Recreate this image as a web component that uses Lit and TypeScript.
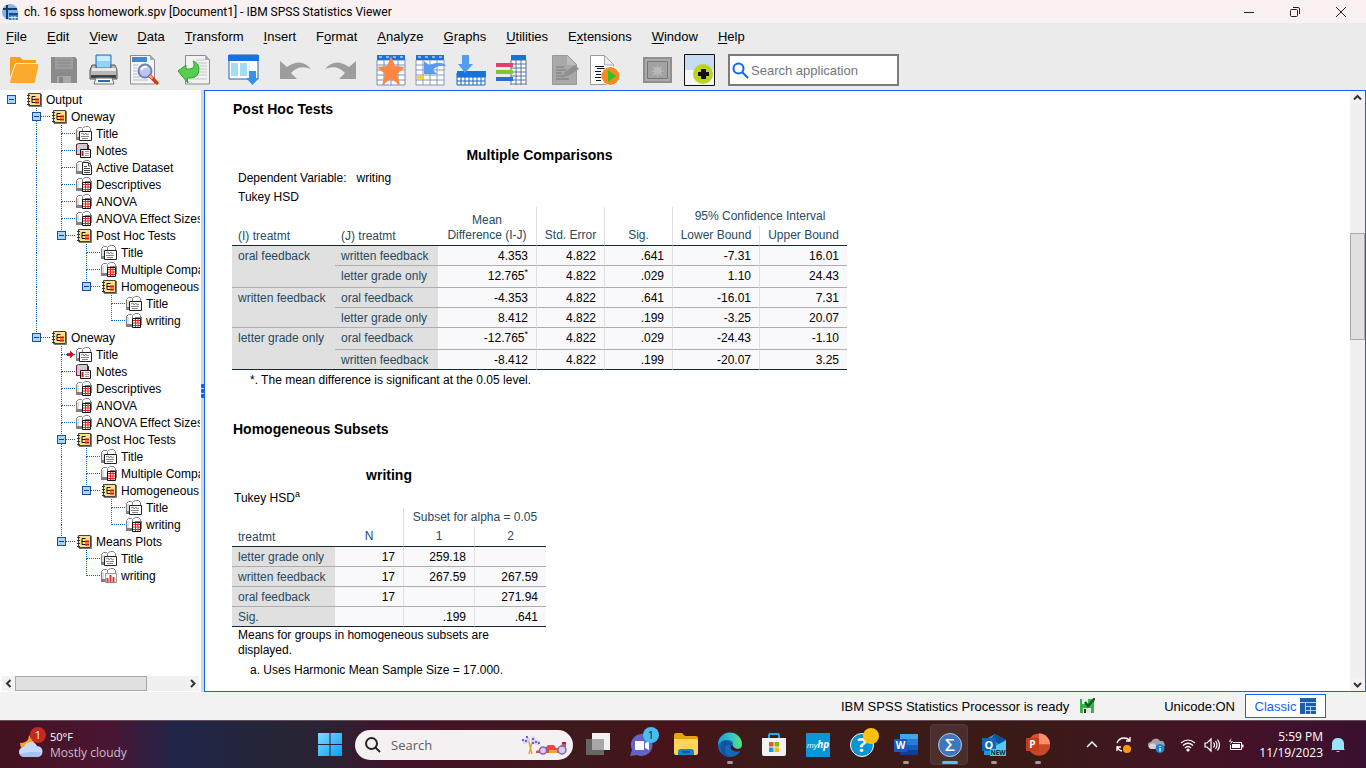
import { LitElement, html, svg, css, nothing } from "lit";
import { customElement, property } from "lit/decorators.js";

const grid = (x: number, y: number, w: number, h: number, sx: number, sy: number, color: string) => {
  const lines = [];
  for (let i = x; i <= x + w; i += sx) lines.push(svg`<path d="M${i} ${y}v${h}" stroke=${color} fill="none"/>`);
  for (let j = y; j <= y + h; j += sy) lines.push(svg`<path d="M${x} ${j}h${w}" stroke=${color} fill="none"/>`);
  return lines;
};

/* ---------- toolbar artwork, 32 x 32 ---------- */
const toolIcons: Record<string, unknown> = {
  open: svg`<path d="M2 4q0-1 1-1h9l3 3h12q1 0 1 1v2H8L2 24z" fill="#f8a11c"/>
    <path d="M9 10h20q1.500 0 1.300 1.500L27 28q-.3 1-1.500 1H3q-1.400 0-1-1.500L7 11.500Q7.500 10 9 10z" fill="#faab2b"/>
    <path d="M2 25L7.500 9.500H28" stroke="#ebebeb" fill="none"/>`,
  save: svg`<path d="M3 3h24l2 2v24H3z" fill="#8b8b8b"/><path d="M7 3h18v12H7z" fill="#9d9d9d"/>
    <path d="M9 6h14M9 9h14M9 12h14" stroke="#898989"/><path d="M9 22h14v7H9z" fill="#a9a9a9"/><path d="M11 23h4v6h-4z" fill="#858585"/>`,
  print: svg`<path d="M8 1h15v13H8z" fill="#8fd3fa" stroke="#2475bd"/><path d="M9 2h13v5H9z" fill="#c9ecff"/>
    <path d="M4 11h4v4h15v-4h4l2 5v9H2v-9z" fill="#b8b8b8" stroke="#555"/><path d="M4 14h24v3H4z" fill="#e8e8e8"/>
    <path d="M3 21h25v3H3z" fill="#444"/><path d="M8 24h16l2 6H6z" fill="#f9fbff" stroke="#777"/><path d="M10 26h12v2H10z" fill="#2f6fb1"/>`,
  preview: svg`<path d="M2.500 1.500h20l4 4.500v24h-24z" fill="#f3f5f8" stroke="#8b8b8b"/><path d="M22 1v5h5z" fill="#aaa"/>
    <path d="M4 3h15v5H4z" fill="#3b8cd2"/><path d="M5 11h5M5 14h4M5 17h4M5 20h4M5 23h7M5 26h15" stroke="#bbb"/>
    <circle cx="17" cy="17" r="6.500" fill="#b9c5f6" stroke="#7481b5" stroke-width="2"/><path d="M13 16q2-4 6-3" stroke="#fff" fill="none" stroke-width="2"/>
    <path d="M22 22l7 7" stroke="#d63c18" stroke-width="3.500" stroke-linecap="round"/><path d="M21.500 21.500l3 3" stroke="#f1b38e" stroke-width="2"/>`,
  exporter: svg`<path d="M7.500 1.500h20l4 4.500v24h-24z" fill="#f2f2f2" stroke="#8b8b8b"/><path d="M27 1v5h5z" fill="#aaa"/>
    <path d="M18 6h8M20 9h9M22 12h7M22 15h7M20 18h9M18 21h11M12 25h17" stroke="#c5c5c5"/>
    <path d="M0 17l8-6v4q9 1 8-5 0-2-1-3 6 2 6 8 0 9-9 9h-3l1 5z" fill="#55d04c" stroke="#2f9a32"/>`,
  insertTable: svg`<path d="M1 1h29v24H1z" fill="#fff" stroke="#1a63b4"/><path d="M0 1h31v6H0z" fill="#1673dd"/>
    <path d="M3 9h7v13H3zM12 9h7v13h-7z" fill="#a3dcf5"/><path d="M21 9v13" stroke="#d5e9f5"/>
    <path d="M21 17h7v7h3l-6.500 7-6.500-7h3z" fill="#3a8fe8"/>`,
  undo: svg`<path d="M2 7v18h17l-6-6q8-9 20-4Q23 3 9 13z" fill="#9d9d9d"/>`,
  redo: svg`<path d="M28 7v18H11l6-6Q9 10-3 15 7 3 21 13z" fill="#9d9d9d"/>`,
  star: svg`<path d="M-1 1h28v30H-1z" fill="#fff"/>${grid(-1, 6, 28, 25, 7, 5, "#7a8fb5")}<path d="M-1 1h28v5H-1z" fill="#1673dd"/>
    <path d="M1 3h3M8 3h3M15 3h3M22 3h3" stroke="#fff"/><path d="M13 2l4 10 10 1-8 7 3 11-9-6-9 6 3-11-8-7 10-1z" fill="#fc8642"/>`,
  gotoCase: svg`<path d="M-2 1h28v30H-2z" fill="#fff"/>${grid(-2, 6, 28, 25, 7, 5, "#8498bb")}<path d="M-2 1h28v5H-2z" fill="#1673dd"/>
    <path d="M0 3h3M7 3h3M14 3h3M21 3h3" stroke="#fff"/><path d="M-1 21h6v4h-6z" fill="#f7d22e"/><path d="M6 7v13h13l-4-4q4-5 13-4-4-6-17-1z" fill="#5a9bf0"/>`,
  insertVar: svg`<path d="M-1 18h29v13H-1z" fill="#fff"/>${grid(-1, 19, 28, 12, 4, 4, "#1b64b8")}<path d="M-1 17h29v6H-1z" fill="#1673dd"/>
    <path d="M4 1h7v9h4l-8 9-7-9h4z" fill="#549cec"/>`,
  variables: svg`<path d="M13 1h15v30H13z" fill="#fff"/>${grid(13, 6, 15, 25, 5, 4, "#59719f")}<path d="M13 1h15v5H13z" fill="#1673dd"/>
    <path d="M-2 9h17v4H-2z" fill="#e23f6c"/><path d="M-2 16h17v4H-2z" fill="#7cc928"/><path d="M-2 23h17v4H-2z" fill="#2a6ed3"/>`,
  edit: svg`<path d="M4.500 1.500h15l9 9v20h-24z" fill="#a9a9a9" stroke="#999"/><path d="M19 2v9h9z" fill="#bdbdbd"/>
    <path d="M8 13h8M8 16h10M8 19h6M8 22h9M8 25h13" stroke="#777"/><path d="M14 24l3-6 10-7 4 4-9 6z" fill="#8f8f8f"/>`,
  run: svg`<path d="M2.500 1.500h14l9 9v20h-23z" fill="#fff" stroke="#999"/><path d="M16.500 2v9h9" fill="#ececec" stroke="#aaa"/>
    <path d="M7 12.500h9M9 14.500h8M7 17.500h6M8 20.500h6M7 23.500h7M8 26.500h5" stroke="#111"/><circle cx="23" cy="22" r="10" fill="#fff"/><circle cx="22.500" cy="22" r="9" fill="#f68a20"/><path d="M20 16l8 6-8 6z" fill="#2fc41d"/>`,
  frame: svg`<path d="M5 3h29v26H5z" fill="#8f8f8f"/><path d="M7 5h25v22H7z" fill="#aaa"/><path d="M9.500 7.500h20v17h-20z" fill="#a2a2a2" stroke="#757575"/>
    <path d="M19.500 10l1 4 4-2-2 4 4 1-4 1 2 4-4-2-1 4-1-4-4 2 2-4-4-1 4-1-2-4 4 2z" fill="#b9b9b9"/>`,
  add: svg`<g transform="translate(-4 0)"><path d="M.5.5h30v31H.5z" fill="#f4f6fa" stroke="#111"/><path d="M1 1h29v15H1z" fill="#c5dcf3"/><circle cx="19" cy="20" r="10" fill="#bcd31f"/>
    <path d="M17 15h5v3h3v4h-3v3h-5v-3h-3v-4h3z" fill="#111"/></g>`,
};

/* ---------- outline icons, 16 x 16 ---------- */
const books = svg`<path d="M.5 12.500v-9l2-2h3l1 1 1-1 2-1h3l2 2v10z" fill="#fff" stroke="#808080"/><path d="M0 11h7v3H0z" fill="#808080"/><path d="M1 4h2v7H1z" fill="#ddd"/><path d="M6.500 3v10" stroke="#808080"/>`;
const treeIcons: Record<string, unknown> = {
  outline: svg`<path d="M2.500 1.500h12v12h-12z" fill="#ffe17f" stroke="#444"/><path d="M15.500 2v12.500H3" stroke="#777" fill="none"/>
    <path d="M1 3.500h3M1 6.500h3M1 9.500h3M1 12.500h3" stroke="#333"/><path d="M9.500 4.500H6v6h3M6 7.500h3" stroke="#111" fill="none"/><path d="M9 7.500h4M9 10.500h4" stroke="#e80d0d" stroke-width="2"/>`,
  title: svg`${books}<path d="M3.500 5.500h12v9h-12z" fill="#fff" stroke="#222"/><path d="M5 8l2-1 1 2 2-2 1 2 2-1M5 10.500h8M6 12.500h6" stroke="#888" fill="none"/>`,
  notes: svg`<path d="M.5 1.500l2-1h9v11H.5z" fill="#cfcbd0" stroke="#333"/><path d="M.5 1.500v10h4M12.500 2v5" stroke="#702030" fill="none"/>
    <path d="M4.500 6.500h10v8h-10z" fill="#fff" stroke="#111"/><path d="M6.500 8v5" stroke="#ef1010" stroke-width="2"/><path d="M9 8.500h4M9 10.500h4M9 12.500h4" stroke="#999"/>`,
  data: svg`${books}<path d="M6.500 2.500h6l3 3v9h-9z" fill="#fff" stroke="#222"/><path d="M12.500 3v3h3M8 6.500h3M8 8.500h6M8 10.500h6M8 12.500h6" stroke="#444" fill="none"/>`,
  table: svg`${books}<path d="M9 4h7v8H9z" fill="#808080"/><path d="M6.500 5.500h8v9h-8z" fill="#fff" stroke="#111"/><path d="M7 7.500h7M7 10h7M7 12.500h7" stroke="#ee1c1c"/><path d="M9.500 6v8M12 6v8" stroke="#ee1c1c"/>`,
  plot: svg`${books}<path d="M4.500 5.500h11v9h-11z" fill="#fff" stroke="#999"/><path d="M6.500 10v4.500M9.500 7v7.500M12.500 9v5.500" stroke="#d93636" stroke-width="2"/>`,
};

interface Node { label: string; icon: string; current?: boolean; children?: Node[] }
const t = (label: string, icon: string): Node => ({ label, icon });
const group = (label: string, children: Node[]): Node => ({ label, icon: "outline", children });
const postHoc = () =>
  group("Post Hoc Tests", [
    t("Title", "title"),
    t("Multiple Comparisons", "table"),
    group("Homogeneous Subsets", [t("Title", "title"), t("writing", "table")]),
  ]);
const outline: Node = group("Output", [
  group("Oneway", [
    t("Title", "title"), t("Notes", "notes"), t("Active Dataset", "data"), t("Descriptives", "table"),
    t("ANOVA", "table"), t("ANOVA Effect Sizes", "table"), postHoc(),
  ]),
  group("Oneway", [
    { label: "Title", icon: "title", current: true }, t("Notes", "notes"), t("Descriptives", "table"), t("ANOVA", "table"),
    t("ANOVA Effect Sizes", "table"), postHoc(),
    group("Means Plots", [t("Title", "title"), t("writing", "plot")]),
  ]),
]);

@customElement("outline-tree")
class OutlineTree extends LitElement {
  static styles = css`
    :host { display: block; overflow: hidden; font-size: 12px; }
    ul { list-style: none; margin: 0; padding: 0; }
    .row { display: flex; align-items: center; height: 17px; white-space: nowrap; }
    .guide { flex: none; width: 25px; height: 17px; overflow: visible; }
    .icon { flex: none; width: 16px; height: 16px; margin: 0 4px 0 1px; }
    button { border: 0; background: none; padding: 0; display: flex; font: inherit; color: inherit; }
  `;

  private guide(top: boolean, bottom: boolean, out: boolean, box: boolean, arrow: boolean) {
    return html`<svg class="guide" viewBox="0 0 25 17" shape-rendering="crispEdges" aria-hidden="true">
      <g stroke="#0a66b8" stroke-dasharray="1 1" fill="none">
        ${top ? svg`<path d="M11.500 0v9"/>` : nothing}
        ${bottom ? svg`<path d="M11.500 9v8"/>` : nothing}
        ${out ? svg`<path d="M12 8.500h14"/>` : nothing}
      </g>
      ${box ? svg`<path d="M7.500 4.500h8v8h-8z" fill="#a9d5fb" stroke="#1a4f9c"/><path d="M9 8.500h5" stroke="#123f88"/>` : nothing}
      ${arrow ? svg`<path d="M17 7h3V5h1v1h1v1h1v1h1v1h-1v1h-1v1h-1v1h-1v-2h-3z" fill="#f00"/>` : nothing}
    </svg>`;
  }

  private branch(n: Node, level: number, more: boolean[], last: boolean): unknown {
    const own = this.guide(level > 0, level > 0 && !last, level > 0, !!n.children, !!n.current);
    return html`<li role="treeitem">
      <div class="row">
        ${more.map((m) => this.guide(m, m, false, false, false))}
        ${n.children ? html`<button aria-label="Collapse ${n.label}">${own}</button>` : own}
        <svg class="icon" viewBox="0 0 16 16" aria-hidden="true">${treeIcons[n.icon]}</svg>
        <span>${n.label}</span>
      </div>
      ${n.children
        ? html`<ul role="group">${n.children.map((c, i) =>
            this.branch(c, level + 1, [...more, level > 0 && !last], i === n.children!.length - 1))}</ul>`
        : nothing}
    </li>`;
  }

  render() {
    return html`<ul role="tree">${this.branch(outline, 0, [], true)}</ul>`;
  }
}

const tableStyles = css`
  table { table-layout: fixed; border-spacing: 0; border-collapse: separate; }
  .title { margin: 0 0 6px; font-size: 14px; line-height: 16px; font-weight: bold; text-align: center; }
  .layer { line-height: 19px; padding-left: 6px; margin: 0; white-space: pre; }
  .layer.near { padding-left: 2px; }
  th { font-weight: normal; color: #264a60; }
  th, td { box-sizing: border-box; padding: 2px 8px 0; line-height: 17px; height: 20px; vertical-align: top; border-bottom: 1px solid #aeaeae; }
  td { text-align: right; background: #f9f9fb; border-right: 1px solid #e0e0e0; }
  td:last-child { border-right: 0; }
  thead th { border: 0 solid #e0e0e0; border-right-width: 1px; text-align: center; vertical-align: bottom; padding: 0 2px 2px; line-height: 15px; }
  thead th.name { text-align: left; padding: 0 6px 1px; border-right: 0; }
  thead th.end { border-right: 0; }
  thead .upper { height: 19px; }
  thead th.base { border-bottom: 1px solid #152935; }
  tbody th { text-align: left; background: #e0e0e0; padding: 2px 0 0 6px; white-space: nowrap; }
  .tall td, .tall th.inner { height: 22px; }
  tbody tr:last-child > *, tbody th.close { border-bottom-color: #152935; }
  sup { font-size: 9px; line-height: 0; vertical-align: 5px; }
  .foot { margin: 0; line-height: 19px; padding: 1px 0 0 18px; }
  .note { margin: 0; line-height: 15px; padding: 1px 6px 2px; }
`;

interface Pair { i?: string; j: string; star?: boolean; tall?: boolean; v: string[] }

@customElement("multiple-comparisons")
class MultipleComparisons extends LitElement {
  static styles = [tableStyles, css`:host { display: block; width: 615px; }`];
  private rows: Pair[] = [
    { i: "oral feedback", j: "written feedback", v: ["4.353", "4.822", ".641", "-7.31", "16.01"] },
    { j: "letter grade only", star: true, tall: true, v: ["12.765", "4.822", ".029", "1.10", "24.43"] },
    { i: "written feedback", j: "oral feedback", v: ["-4.353", "4.822", ".641", "-16.01", "7.31"] },
    { j: "letter grade only", v: ["8.412", "4.822", ".199", "-3.25", "20.07"] },
    { i: "letter grade only", j: "oral feedback", star: true, tall: true, v: ["-12.765", "4.822", ".029", "-24.43", "-1.10"] },
    { j: "written feedback", v: ["-8.412", "4.822", ".199", "-20.07", "3.25"] },
  ];
  render() {
    return html`
      <h3 class="title">Multiple Comparisons</h3>
      <p class="layer">Dependent Variable:   writing</p>
      <p class="layer">Tukey HSD</p>
      <table>
        <colgroup><col width="103"><col width="103"><col width="99"><col width="68"><col width="68"><col width="87"><col width="87"></colgroup>
        <thead>
          <tr class="upper">
            <th class="name base" rowspan="2">(I) treatmt</th><th class="name base" rowspan="2">(J) treatmt</th>
            <th class="base" rowspan="2">Mean<br>Difference (I-J)</th><th class="base" rowspan="2">Std. Error</th>
            <th class="base" rowspan="2">Sig.</th><th class="upper end" colspan="2">95% Confidence Interval</th>
          </tr>
          <tr><th class="base">Lower Bound</th><th class="base end">Upper Bound</th></tr>
        </thead>
        <tbody>
          ${this.rows.map((r, n) => html`<tr class=${r.tall ? "tall" : ""}>
            ${r.i ? html`<th class=${n === 4 ? "close" : ""} rowspan="2">${r.i}</th>` : nothing}
            <th class="inner">${r.j}</th>
            ${r.v.map((v, k) => html`<td>${v}${r.star && k === 0 ? html`<sup>*</sup>` : nothing}</td>`)}
          </tr>`)}
        </tbody>
      </table>
      <p class="foot">*. The mean difference is significant at the 0.05 level.</p>
    `;
  }
}

@customElement("subset-table")
class SubsetTable extends LitElement {
  static styles = [tableStyles, css`:host { display: block; width: 314px; }`];
  private rows = [
    ["letter grade only", "17", "259.18", ""],
    ["written feedback", "17", "267.59", "267.59"],
    ["oral feedback", "17", "", "271.94"],
    ["Sig.", "", ".199", ".641"],
  ];
  render() {
    return html`
      <h3 class="title">writing</h3>
      <p class="layer near">Tukey HSD<sup>a</sup></p>
      <table>
        <colgroup><col width="103"><col width="69"><col width="71"><col width="71"></colgroup>
        <thead>
          <tr class="upper"><th class="name base" rowspan="2">treatmt</th><th class="base" rowspan="2">N</th>
            <th class="upper end" colspan="2">Subset for alpha = 0.05</th></tr>
          <tr><th class="base">1</th><th class="base end">2</th></tr>
        </thead>
        <tbody>${this.rows.map(([name, ...v]) => html`<tr><th>${name}</th>${v.map((c) => html`<td>${c}</td>`)}</tr>`)}</tbody>
      </table>
      <p class="note">Means for groups in homogeneous subsets are displayed.</p>
      <p class="foot">a. Uses Harmonic Mean Sample Size = 17.000.</p>
    `;
  }
}

@customElement("scroll-bar")
class ScrollBar extends LitElement {
  @property({ type: Boolean, reflect: true }) vertical = false;
  @property({ type: Number }) start = 0;
  @property({ type: Number }) size = 50;
  static styles = css`
    :host { display: flex; height: 15px; background: #f0f0f0; }
    :host([vertical]) { flex-direction: column; width: 15px; height: auto; }
    button { flex: none; width: 13px; height: 15px; border: 0; padding: 0; background: #f2f2f2; display: grid; place-items: center; }
    :host([vertical]) button { width: 15px; height: 13px; }
    .track { flex: 1; display: flex; min-width: 0; min-height: 0; }
    :host([vertical]) .track { flex-direction: column; }
    .thumb { box-sizing: border-box; background: #e0e0e0; border: 1px solid #a9a9a9; }
    svg { width: 9px; height: 9px; fill: none; stroke: #333; stroke-width: 2; }
  `;
  render() {
    const back = this.vertical ? "M1 6.500l3.500-3.500L8 6.500" : "M6.500 1L3 4.500 6.500 8";
    const next = this.vertical ? "M1 3l3.500 3.500L8 3" : "M3 1l3.500 3.500L3 8";
    return html`
      <button aria-label="Scroll back"><svg viewBox="0 0 9 9"><path d=${back}></path></svg></button>
      <div class="track">
        <div style="flex: 0 0 ${this.start}%"></div>
        <div class="thumb" style="flex: 0 0 ${this.size}%"></div>
      </div>
      <button aria-label="Scroll forward"><svg viewBox="0 0 9 9"><path d=${next}></path></svg></button>
    `;
  }
}

/* ---------- taskbar artwork, 24 x 24 ---------- */
const appIcons: { name: string; running?: boolean; active?: boolean; art: unknown }[] = [
  { name: "Task view", art: svg`<path d="M6 0h18v17H6z" fill="#f2f0f0"/><path d="M0 6h18v16H0z" fill="#666"/><path d="M6 6h12v11H6z" fill="#a9a7a6"/>` },
  { name: "Chat", art: svg`<path d="M12 1a11 11 0 1 1-5 21l-7 1 2-6A11 11 0 0 1 12 1z" fill="#6264c7"/><path d="M5 8h9v9H5zM15 10l4-2v9l-4-2z" fill="#fff"/>
      <circle cx="21" cy="2" r="8" fill="#46bdf5"/><text x="21" y="6" font-size="11" text-anchor="middle" fill="#0a2540">1</text>` },
  { name: "File Explorer", art: svg`<path d="M0 2q0-2 2-2h6l3 3h11q2 0 2 2v4H0z" fill="#e5a50e"/><path d="M0 6h22q2 0 2 2v12q0 2-2 2H2q-2 0-2-2z" fill="#ffd45b"/><path d="M4 22v-3q0-3 3-3h10q3 0 3 3v3z" fill="#1680d3"/><path d="M8 19h8" stroke="#0b5da7" stroke-width="2"/>` },
  { name: "Edge", running: true, art: svg`<defs><linearGradient id="edge" x1="0" x2="1"><stop offset="0" stop-color="#1b9de2"/><stop offset=".6" stop-color="#36c7c5"/><stop offset="1" stop-color="#62df65"/></linearGradient></defs>
      <circle cx="12" cy="12" r="12" fill="#1267b9"/><path d="M0 12A12 12 0 0 1 24 11q0 5-6 5-5 0-3-3 1-6-5-6-6 0-10 5z" fill="url(#edge)"/><path d="M3 9q4-3 8-1 3 2 2 5-4-3-6 1-2 7 5 10Q1 23 3 9z" fill="#0f549f"/><path d="M14 12q-3 2 0 5 4 3 8 1l2 2v-5q-6 3-10-3z" fill="#3e1a1b"/>` },
  { name: "Microsoft Store", art: svg`<path d="M7 5V2q0-1 1-1h8q1 0 1 1v3" fill="none" stroke="#28a8ea" stroke-width="2"/><path d="M0 5h24v16q0 2-2 2H2q-2 0-2-2z" fill="#f3f2f2"/><path d="M7 9h4.500v4.500H7z" fill="#ef4f25"/><path d="M12.500 9H17v4.500h-4.500z" fill="#7db900"/><path d="M7 14.500h4.500V19H7z" fill="#02a4ee"/><path d="M12.500 14.500H17V19h-4.500z" fill="#fcb80b"/>` },
  { name: "myHP", art: svg`<path d="M0 0h24v24H0z" fill="#0796d6"/><text x="12" y="15" font-size="8" font-style="italic" text-anchor="middle" fill="#fff">my<tspan font-size="10" font-weight="bold">hp</tspan></text>` },
  { name: "Help", art: svg`<circle cx="12" cy="12" r="11.500" fill="#0a94d2" stroke="#fff"/><text x="12" y="19" font-size="20" font-weight="bold" text-anchor="middle" fill="#fff">?</text><circle cx="21" cy="3" r="8" fill="#ffc10d"/>` },
  { name: "Word", running: true, art: svg`<path d="M6 1h18v6H6z" fill="#41a5ee"/><path d="M6 6h18v6H6z" fill="#2b7cd3"/><path d="M6 12h18v5H6z" fill="#185abd"/><path d="M6 17h18v5H6z" fill="#103f91"/><path d="M0 6h13v13H0z" fill="#185abd"/><text x="6.500" y="16" font-size="10" font-weight="bold" text-anchor="middle" fill="#fff">W</text>` },
  { name: "SPSS Statistics", running: true, active: true, art: svg`<circle cx="12" cy="12" r="11.500" fill="#3d78bf" stroke="#b6c7df"/><text x="12" y="18" font-size="17" font-weight="600" text-anchor="middle" fill="#fff">Σ</text>` },
  { name: "Outlook", running: true, art: svg`<path d="M2 7L13 1l11 6v15H2z" fill="#2990df"/><path d="M13 1l11 6-5 6-9-8z" fill="#0a4f9b"/><path d="M10 15l14-8v15H10z" fill="#53c9f5"/><path d="M0 5h14v13H0z" fill="#1066b5"/><text x="7" y="15.500" font-size="11" font-weight="bold" text-anchor="middle" fill="#fff">O</text>
      <path d="M8 16h16v7H8z" fill="#31dce4"/><text x="16" y="22" font-size="6.500" font-weight="bold" text-anchor="middle" fill="#06263a">NEW</text>` },
  { name: "PowerPoint", running: true, art: svg`<circle cx="13" cy="11.500" r="11" fill="#d35230"/><path d="M13 .5a11 11 0 0 1 11 11H13z" fill="#ff8f6b"/><path d="M24 11.500a11 11 0 0 1-11 11 11 11 0 0 1-9-5l9-6z" fill="#c8492a"/><path d="M0 5h13v13H0z" fill="#c43e1c"/><text x="6.500" y="15" font-size="10" font-weight="bold" text-anchor="middle" fill="#fff">P</text>` },
];

@customElement("task-bar")
class TaskBar extends LitElement {
  static styles = css`
    :host {
      display: grid; grid-template-columns: 1fr auto 1fr; height: 48px; box-sizing: border-box; border-top: 1px solid #66505a;
      background: linear-gradient(90deg, #45121f 0, #4a1533 8%, #20264a 13%, #242536 20%, #2b2232 24%, #43132a 29%, #441424 34%, #3d1a1c 42%, #48131a 49%, #3d1a1b 55%, #3a1a16 75%, #411621 84%, #451226 89%, #3a1030 100%);
      color: #fff; font-family: "Open Sans", "Noto Sans", sans-serif; font-size: 12px; line-height: 16px;
    }
    button { border: 0; background: none; padding: 0; color: inherit; font: inherit; }
    svg { overflow: visible; }
    svg text { font-family: "Open Sans", sans-serif; }
    .weather { display: flex; align-items: center; gap: 6px; padding-left: 18px; text-align: left; justify-self: start; }
    .weather svg { width: 26px; height: 30px; }
    .weather span { display: block; font-size: 11px; }
    .weather .sky { font-size: 12px; color: #c9bfcc; }
    .center { display: flex; align-items: center; padding-left: 2px; }
    .cell { position: relative; width: 44px; height: 47px; display: grid; place-items: center; }
    .cell svg { width: 24px; height: 24px; }
    .cell.active { z-index: 0; }
    .cell.active::before { content: ""; position: absolute; z-index: -1; inset: 3px 4px 3px 2px; border-radius: 4px; background: #4b2f2e; border: 1px solid #563a39; }
    .cell.running::after { content: ""; position: absolute; bottom: 4px; width: 6px; height: 3px; border-radius: 2px; background: #a59a9a; }
    .cell.active::after { width: 16px; background: #4cc2ff; }
    .search { display: flex; align-items: center; gap: 10px; box-sizing: border-box; width: 218px; height: 30px; margin: 0 3px; padding: 0 6px 0 10px; border-radius: 15px; background: #f5f1f3; }
    .search .lens { flex: none; width: 16px; height: 16px; }
    .search .race { flex: none; width: 46px; height: 24px; }
    input { flex: 1; min-width: 0; border: 0; padding: 0; outline: 0; background: none; font: 13px/18px "Open Sans", sans-serif; color: #333; }
    input::placeholder { color: #5f5b5d; opacity: 1; }
    .tray { display: flex; align-items: center; justify-content: flex-end; padding-right: 20px; }
    .tray svg { width: 16px; height: 16px; }
    .tray button { display: grid; place-items: center; width: 32px; height: 40px; }
    .tray .quick { display: flex; gap: 8px; align-items: center; width: 80px; justify-content: center; }
    .tray .clock { display: block; width: auto; height: auto; text-align: right; padding: 0 7px; }
    .tray .bell { width: 16px; }
  `;
  render() {
    return html`
      <button class="weather">
        <svg viewBox="0 0 26 30" aria-hidden="true"><path d="M11 5q0 8-9 8 0 7 7 7 9-2 7-10-3-1-5-5z" fill="#f5a524"/>
          <path d="M6 27a5 5 0 0 1 0-10 7 7 0 0 1 13-1 5.500 5.500 0 0 1 0 11z" fill="#c4d9fb"/><path d="M2 24q9-3 21-2-1 5-5 5H6q-3 0-4-3z" fill="#a3c2f2"/>
          <circle cx="20" cy="5" r="8" fill="#c8281f"/><text x="20" y="9" font-size="11" text-anchor="middle" fill="#fff">1</text></svg>
        <div><span>50°F</span><span class="sky">Mostly cloudy</span></div>
      </button>
      <div class="center">
        <button class="cell" aria-label="Start"><svg viewBox="0 0 24 24"><defs><linearGradient id="win" x1="0" y1="0" x2="1" y2="1"><stop offset="0" stop-color="#7adcff"/><stop offset="1" stop-color="#0f9bf5"/></linearGradient></defs>
          <path d="M0 0h11.500v11H0zM12.500 0H24v11H12.500zM0 12h11.500v11H0zM12.500 12H24v11H12.500z" fill="url(#win)"/></svg></button>
        <label class="search">
          <svg class="lens" viewBox="0 0 16 16" fill="none" stroke="#252525" stroke-width="2" aria-hidden="true"><circle cx="6.500" cy="6.500" r="5.500"/><path d="M10.500 10.500l4.500 4.500"/></svg>
          <input type="search" placeholder="Search" aria-label="Search">
          <svg class="race" viewBox="0 0 46 24" aria-hidden="true"><path d="M7 5l4 16M12 6L8 21" stroke="#e5a332" stroke-width="1.500"/>
            <path d="M0 6l3 2 3-5 3 3-2 4-4 1zM10 5l3-2 2 4 4 1-1 5-4-2-4-1z" fill="#d5d0f4"/><path d="M1 6h2v2H1zM5 3h2v2H5zM4 7h2v2H4zM11 5h2v2h-2zM14 8h2v2h-2zM17 9h2v2h-2zM11 9h2v2h-2z" fill="#6e62c8"/>
            <path d="M15 18l9-3 3-3h6l2 3h5l1-5h4v10H15z" fill="#e8464a"/><path d="M28 17h8v3h-8z" fill="#f5a524"/><path d="M41 9h4v2h-4z" fill="#8c2e6e"/><circle cx="22" cy="17.500" r="3.500" fill="#d9cdee" stroke="#7d6aaf" stroke-width="1.500"/><circle cx="41" cy="17" r="4" fill="#d9cdee" stroke="#7d6aaf" stroke-width="1.500"/></svg>
        </label>
        ${appIcons.map((a) => html`<button class="cell ${a.running ? "running" : ""} ${a.active ? "active" : ""}" aria-label=${a.name}>
          <svg viewBox="0 0 24 24">${a.art}</svg></button>`)}
      </div>
      <div class="tray">
        <button aria-label="Show hidden icons"><svg viewBox="0 0 16 16" fill="none" stroke="#fff" stroke-width="1.500"><path d="M3 10l5-5 5 5"/></svg></button>
        <button aria-label="Update"><svg viewBox="0 0 16 16" fill="none" stroke="#fff" stroke-width="1.300"><path d="M1 6q2-5 7-5 4 0 6 3M14 0v4h-4M1 9q1 4 5 5M1 14v-4h4"/><circle cx="11" cy="12" r="4" fill="#ff9810" stroke="none"/></svg></button>
        <button aria-label="OneDrive"><svg viewBox="0 0 16 16"><path d="M3 11a3 3 0 0 1 0-6 5 5 0 0 1 9-1 3 3 0 0 1 2 7z" fill="#a6a0a4"/><path d="M3 12q-3-1-2-4 3-3 6-1l3 5z" fill="#d6d2d4"/><circle cx="12" cy="11.500" r="4.500" fill="#1787dc"/><path d="M12 9v1M12 11v3.500" stroke="#fff" stroke-width="1.300"/></svg></button>
        <button class="quick" aria-label="Network, volume, battery">
          <svg viewBox="0 0 16 16" fill="none" stroke="#fff" stroke-width="1.200"><path d="M1 6q7-6 14 0M3 8.500q5-4.500 10 0M5 11q3-3 6 0"/><circle cx="8" cy="13" r="1" fill="#fff"/></svg>
          <svg viewBox="0 0 16 16" fill="none" stroke="#fff" stroke-width="1.200"><path d="M1 6h2l4-4v12l-4-4H1zM9.500 5.500q2 2.500 0 5M11.500 4q3 4 0 8M13.500 2.500q4 5.500 0 11"/></svg>
          <svg viewBox="0 0 16 16"><path d="M2.500 5.500h11v7h-11z" fill="none" stroke="#fff"/><path d="M4 7h8v4H4z" fill="#fff"/><path d="M14.500 7.500v3" stroke="#fff" stroke-width="2"/><path d="M4 0L0 5h3L1 9l5-5H3z" fill="#fff" stroke="#451226" stroke-width=".8"/></svg>
        </button>
        <button class="clock">5:59 PM<br>11/19/2023</button>
        <button class="bell" aria-label="Notifications"><svg viewBox="0 0 16 16"><path d="M2 12V6q1-5 6-5t6 5v6l1 1H1zM6 14h4q-2 2-4 0z" fill="#9be3fb"/></svg></button>
      </div>
    `;
  }
}

const menus: [string, string, string][] = [
  ["", "F", "ile"], ["", "E", "dit"], ["", "V", "iew"], ["", "D", "ata"], ["", "T", "ransform"], ["", "I", "nsert"], ["F", "o", "rmat"],
  ["", "A", "nalyze"], ["", "G", "raphs"], ["", "U", "tilities"], ["E", "x", "tensions"], ["", "W", "indow"], ["", "H", "elp"],
];
const tools: [string, string, boolean][] = [
  ["open", "Open", false], ["save", "Save", false], ["print", "Print", false], ["preview", "Print preview", false],
  ["exporter", "Export", true], ["insertTable", "Recall dialogs", true], ["undo", "Undo", true], ["redo", "Redo", true],
  ["star", "Go to data", true], ["gotoCase", "Go to case", false], ["insertVar", "Go to variable", false], ["variables", "Variables", false],
  ["edit", "Edit output", true], ["run", "Run script", false], ["frame", "Designate window", true], ["add", "Customize toolbar", true],
];

@customElement("app-root")
class AppRoot extends LitElement {
  static styles = css`
    :host { display: flex; flex-direction: column; height: 100vh; overflow: hidden; background: #ebebeb; color: #000; font-family: "Liberation Sans", Arial, sans-serif; font-size: 13px; }
    button { border: 0; background: none; padding: 0; color: inherit; font: inherit; }
    .titlebar { display: flex; align-items: center; gap: 6px; height: 23px; padding: 0 2px; background: #f9f0f1; }
    .titlebar h1 { flex: 1; margin: 0; font: 12px/16px Roboto, "Open Sans", sans-serif; white-space: nowrap; }
    .logo { width: 16px; height: 16px; }
    .win { width: 46px; height: 23px; display: grid; place-items: center; margin-left: -6px; }
    .win svg { width: 12px; height: 12px; fill: none; stroke: #222; }
    .menubar { display: flex; gap: 20px; padding: 0 6px; height: 27px; align-items: center; }
    .menubar u { text-underline-offset: 2px; }
    .toolbar { display: flex; align-items: center; gap: 8px; height: 40px; padding: 0 8px; }
    .tool { width: 32px; height: 32px; }
    .tool.apart { margin-left: 10px; }
    .tool svg { display: block; width: 32px; height: 32px; overflow: visible; }
    .find { display: flex; align-items: center; gap: 2px; box-sizing: border-box; width: 171px; height: 32px; border: 2px solid #7b7b7b; background: #fff; padding: 0 2px; }
    .find svg { flex: none; width: 17px; height: 17px; }
    .find input { flex: 1; min-width: 0; border: 0; padding: 0; outline: 0; font: inherit; }
    .find input::placeholder { color: #757575; opacity: 1; }
    .main { flex: 1; min-height: 0; display: flex; background: #fff; }
    .side { flex: none; width: 201px; box-sizing: border-box; padding: 1px 1px 1px 0; display: flex; flex-direction: column; }
    .side outline-tree { flex: 1; min-height: 0; }
    .side scroll-bar { margin: 0 1px 0 2px; }
    .split { flex: none; width: 3px; background: #d6d6d6; display: flex; flex-direction: column; justify-content: center; align-items: center; gap: 1px; }
    .split i { flex: none; width: 4px; height: 4px; border-radius: 1px; background: #0f62fe; }
    .pane { flex: 1; min-width: 0; display: flex; border: 1px solid #0f62fe; }
    .doc { flex: 1; min-width: 0; overflow: hidden; padding: 10px 27px 0; font-size: 12px; }
    .doc h2 { margin: 0 0 30px; padding-left: 1px; font-size: 14px; line-height: 16px; }
    .doc multiple-comparisons { margin-bottom: 31px; }
    .status { display: flex; align-items: center; justify-content: flex-end; height: 28px; padding-right: 40px; background: #f2f2f2; }
    .status svg { width: 16px; height: 16px; }
    .ready { display: flex; align-items: center; gap: 10px; margin-right: 69px; }
    .classic { display: flex; align-items: center; justify-content: center; gap: 4px; box-sizing: border-box; width: 81px; height: 24px; margin-left: 10px; border: 1px solid #0f62fe; background: #fff; color: #0f62fe; }
  `;
  render() {
    return html`
      <header class="titlebar">
        <svg class="logo" viewBox="0 0 16 16" aria-hidden="true"><circle cx="8" cy="8" r="8" fill="#86b4dd"/><path d="M1 4h14v2H1z" fill="#123c74"/><path d="M4 1h2v14H4z" fill="#123c74"/><path d="M7 9h9v7H7z" fill="#2f7dc8"/><path d="M7 9h9v2H7z" fill="#0d4d96"/><path d="M10 12v4M13 12v4M7 13.500h9" stroke="#fff" stroke-width=".8"/></svg>
        <h1>ch. 16 spss homework.spv [Document1] - IBM SPSS Statistics Viewer</h1>
        <button class="win" aria-label="Minimize"><svg viewBox="0 0 12 12"><path d="M1 6.500h10"/></svg></button>
        <button class="win" aria-label="Restore"><svg viewBox="0 0 12 12"><rect x="1.500" y="3.500" width="7" height="7" rx="1"/><path d="M4 1.500h5q1.500 0 1.500 1.500v5"/></svg></button>
        <button class="win" aria-label="Close"><svg viewBox="0 0 12 12"><path d="M1 1l10 10M11 1L1 11"/></svg></button>
      </header>
      <nav class="menubar">${menus.map(([a, key, b]) => html`<button>${a}<u>${key}</u>${b}</button>`)}</nav>
      <div class="toolbar">
        ${tools.map(([icon, label, apart]) => html`<button class="tool ${apart ? "apart" : ""}" aria-label=${label}><svg viewBox="0 0 32 32">${toolIcons[icon]}</svg></button>`)}
        <label class="find">
          <svg viewBox="0 0 17 17" fill="none" stroke="#0f62fe" stroke-width="2" aria-hidden="true"><circle cx="6.500" cy="6.500" r="5"/><path d="M10 10l6 6"/></svg>
          <input placeholder="Search application" aria-label="Search application">
        </label>
      </div>
      <main class="main">
        <aside class="side"><outline-tree></outline-tree><scroll-bar start="0" size="77"></scroll-bar></aside>
        <div class="split"><i></i><i></i><i></i></div>
        <section class="pane">
          <div class="doc">
            <h2>Post Hoc Tests</h2>
            <multiple-comparisons></multiple-comparisons>
            <h2>Homogeneous Subsets</h2>
            <subset-table></subset-table>
          </div>
          <scroll-bar vertical start="22.5" size="18.6"></scroll-bar>
        </section>
      </main>
      <footer class="status">
        <span class="ready">IBM SPSS Statistics Processor is ready
          <svg viewBox="0 0 16 16" aria-hidden="true"><path d="M1 1h14v14H1z" fill="#35b24a"/><path d="M3 1h6v5H3z" fill="#d9f2dc"/><path d="M4 10h8v5H4z" fill="#e5e5e5"/><path d="M5 11h2v4H5z" fill="#333"/><path d="M6 4l3 4 7-8" stroke="#145c22" stroke-width="2.500" fill="none"/></svg></span>
        <span>Unicode:ON</span>
        <button class="classic">Classic
          <svg viewBox="0 0 16 16" aria-hidden="true"><path d="M0 0h16v16H0z" fill="#1c5ca8"/><path d="M0 4.500h16M5.500 5v11M6 8.500h10M6 12.500h10M10.500 9v7" stroke="#a9d0f5"/></svg></button>
      </footer>
      <task-bar></task-bar>
    `;
  }
}
